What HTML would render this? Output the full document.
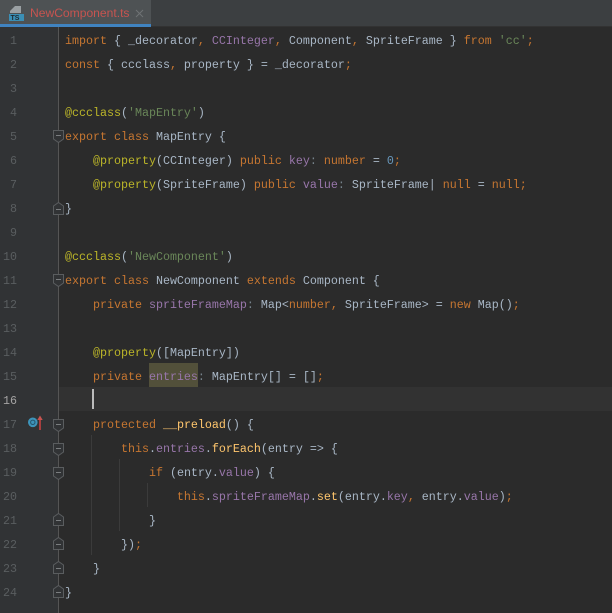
<!DOCTYPE html>
<html><head><meta charset="utf-8">
<style>
html,body{margin:0;padding:0;background:#2b2b2b}
#r{position:relative;width:612px;height:613px;overflow:hidden;background:#2b2b2b}
.a{position:absolute}
.l{position:absolute;left:65px;height:24px;line-height:24px;white-space:pre;font:11.67px/24px "Liberation Mono",monospace;color:#a9b7c6}
.n{position:absolute;left:0;width:17px;text-align:right;height:24px;font:11.67px/24px "Liberation Mono",monospace;color:#5a5e60}
.k{color:#c67631}.s{color:#6a8759}.p{color:#9876aa}.d{color:#bbb529}.m{color:#6897bb}.f{color:#ffc66d}.c{color:#77838c}
.g{position:absolute;width:1px;background:#3b3b3b}
svg.fd{position:absolute;left:52px;width:13px;height:15px}
</style></head><body><div id="r">
<div class="a" style="left:0;top:0;width:612px;height:26px;background:#3c3f41"></div>
<div class="a" style="left:0;top:26px;width:612px;height:1px;background:#323232"></div>
<div class="a" style="left:0;top:0;width:151px;height:24px;background:#4e5254"></div>
<div class="a" style="left:0;top:24px;width:151px;height:3px;background:#4083c0"></div>
<svg class="a" style="left:9px;top:5px" width="16" height="16" viewBox="0 0 16 16"><path d="M6 1H12V8H1V6L6 1Z" fill="#9aa0a3"/><rect x="0" y="9" width="15" height="7" fill="#3b8fb5"/><text x="1.5" y="15" font-family="Liberation Sans" font-size="7" font-weight="bold" fill="#1e2a30">TS</text></svg>
<div class="a" style="left:30px;top:0;height:25px;font:12.1px/26px 'Liberation Sans',sans-serif;color:#c75450;white-space:pre">NewComponent.ts</div>
<svg class="a" style="left:135px;top:9px" width="9" height="9" viewBox="0 0 9 9"><path d="M1 1L8 8M8 1L1 8" stroke="#6f7375" stroke-width="1"/></svg>

<div class="a" style="left:0;top:27px;width:58px;height:586px;background:#313335"></div>
<div class="a" style="left:0;top:387px;width:612px;height:24px;background:#323232"></div>
<div class="a" style="left:0;top:387px;width:58px;height:24px;background:#313335"></div>
<div class="a" style="left:58px;top:27px;width:1px;height:586px;background:#555"></div>
<div class="a" style="left:149px;top:363px;width:49px;height:24px;background:#52503a"></div>
<div class="a" style="left:92px;top:389px;width:2px;height:20px;background:#bbbbbb"></div>

<div class="g" style="left:91px;top:435px;height:120px"></div>
<div class="g" style="left:119px;top:459px;height:72px"></div>
<div class="g" style="left:147px;top:483px;height:24px"></div>

<div class="n" style="top:29px">1</div>
<div class="n" style="top:53px">2</div>
<div class="n" style="top:77px">3</div>
<div class="n" style="top:101px">4</div>
<div class="n" style="top:125px">5</div>
<div class="n" style="top:149px">6</div>
<div class="n" style="top:173px">7</div>
<div class="n" style="top:197px">8</div>
<div class="n" style="top:221px">9</div>
<div class="n" style="top:245px">10</div>
<div class="n" style="top:269px">11</div>
<div class="n" style="top:293px">12</div>
<div class="n" style="top:317px">13</div>
<div class="n" style="top:341px">14</div>
<div class="n" style="top:365px">15</div>
<div class="n" style="top:389px;color:#a4a3a3">16</div>
<div class="n" style="top:413px">17</div>
<div class="n" style="top:437px">18</div>
<div class="n" style="top:461px">19</div>
<div class="n" style="top:485px">20</div>
<div class="n" style="top:509px">21</div>
<div class="n" style="top:533px">22</div>
<div class="n" style="top:557px">23</div>
<div class="n" style="top:581px">24</div>

<div class="l" style="top:29px"><span class="k">import</span> { _decorator<span class="k">,</span> <span class="p">CCInteger</span><span class="k">,</span> Component<span class="k">,</span> SpriteFrame } <span class="k">from</span> <span class="s">'cc'</span><span class="k">;</span></div>
<div class="l" style="top:53px"><span class="k">const</span> { ccclass<span class="k">,</span> property } = _decorator<span class="k">;</span></div>
<div class="l" style="top:101px"><span class="d">@ccclass</span>(<span class="s">'MapEntry'</span>)</div>
<div class="l" style="top:125px"><span class="k">export class</span> MapEntry {</div>
<div class="l" style="top:149px">    <span class="d">@property</span>(CCInteger) <span class="k">public</span> <span class="p">key</span><span class="c">:</span> <span class="k">number</span> = <span class="m">0</span><span class="k">;</span></div>
<div class="l" style="top:173px">    <span class="d">@property</span>(SpriteFrame) <span class="k">public</span> <span class="p">value</span><span class="c">:</span> SpriteFrame| <span class="k">null</span> = <span class="k">null;</span></div>
<div class="l" style="top:197px">}</div>
<div class="l" style="top:245px"><span class="d">@ccclass</span>(<span class="s">'NewComponent'</span>)</div>
<div class="l" style="top:269px"><span class="k">export class</span> NewComponent <span class="k">extends</span> Component {</div>
<div class="l" style="top:293px">    <span class="k">private</span> <span class="p">spriteFrameMap</span><span class="c">:</span> Map&lt;<span class="k">number,</span> SpriteFrame&gt; = <span class="k">new</span> Map()<span class="k">;</span></div>
<div class="l" style="top:341px">    <span class="d">@property</span>([MapEntry])</div>
<div class="l" style="top:365px">    <span class="k">private</span> <span class="p">entries</span><span class="c">:</span> MapEntry[] = []<span class="k">;</span></div>
<div class="l" style="top:413px">    <span class="k">protected</span> <span class="f">__preload</span>() {</div>
<div class="l" style="top:437px">        <span class="k">this</span>.<span class="p">entries</span>.<span class="f">forEach</span>(entry =&gt; {</div>
<div class="l" style="top:461px">            <span class="k">if</span> (entry.<span class="p">value</span>) {</div>
<div class="l" style="top:485px">                <span class="k">this</span>.<span class="p">spriteFrameMap</span>.<span class="f">set</span>(entry.<span class="p">key</span><span class="k">,</span> entry.<span class="p">value</span>)<span class="k">;</span></div>
<div class="l" style="top:509px">            }</div>
<div class="l" style="top:533px">        })<span class="k">;</span></div>
<div class="l" style="top:557px">    }</div>
<div class="l" style="top:581px">}</div>

<svg class="fd" style="top:129px" viewBox="0 0 13 15"><path d="M1.5 1.5H11.5V10L6.5 13.5L1.5 10Z" fill="#313335" stroke="#5a5d5f"/><path d="M4 6.5H9" stroke="#7a7d7f"/></svg>
<svg class="fd" style="top:201px" viewBox="0 0 13 15"><path d="M1.5 13.5H11.5V5L6.5 1.5L1.5 5Z" fill="#313335" stroke="#5a5d5f"/><path d="M4 8.5H9" stroke="#7a7d7f"/></svg>
<svg class="fd" style="top:273px" viewBox="0 0 13 15"><path d="M1.5 1.5H11.5V10L6.5 13.5L1.5 10Z" fill="#313335" stroke="#5a5d5f"/><path d="M4 6.5H9" stroke="#7a7d7f"/></svg>
<svg class="fd" style="top:418px" viewBox="0 0 13 15"><path d="M1.5 1.5H11.5V10L6.5 13.5L1.5 10Z" fill="#313335" stroke="#5a5d5f"/><path d="M4 6.5H9" stroke="#7a7d7f"/></svg>
<svg class="fd" style="top:442px" viewBox="0 0 13 15"><path d="M1.5 1.5H11.5V10L6.5 13.5L1.5 10Z" fill="#313335" stroke="#5a5d5f"/><path d="M4 6.5H9" stroke="#7a7d7f"/></svg>
<svg class="fd" style="top:466px" viewBox="0 0 13 15"><path d="M1.5 1.5H11.5V10L6.5 13.5L1.5 10Z" fill="#313335" stroke="#5a5d5f"/><path d="M4 6.5H9" stroke="#7a7d7f"/></svg>
<svg class="fd" style="top:512px" viewBox="0 0 13 15"><path d="M1.5 13.5H11.5V5L6.5 1.5L1.5 5Z" fill="#313335" stroke="#5a5d5f"/><path d="M4 8.5H9" stroke="#7a7d7f"/></svg>
<svg class="fd" style="top:536px" viewBox="0 0 13 15"><path d="M1.5 13.5H11.5V5L6.5 1.5L1.5 5Z" fill="#313335" stroke="#5a5d5f"/><path d="M4 8.5H9" stroke="#7a7d7f"/></svg>
<svg class="fd" style="top:560px" viewBox="0 0 13 15"><path d="M1.5 13.5H11.5V5L6.5 1.5L1.5 5Z" fill="#313335" stroke="#5a5d5f"/><path d="M4 8.5H9" stroke="#7a7d7f"/></svg>
<svg class="fd" style="top:584px" viewBox="0 0 13 15"><path d="M1.5 13.5H11.5V5L6.5 1.5L1.5 5Z" fill="#313335" stroke="#5a5d5f"/><path d="M4 8.5H9" stroke="#7a7d7f"/></svg>

<svg class="a" style="left:27px;top:414px" width="17" height="17" viewBox="0 0 17 17"><circle cx="5.8" cy="8.3" r="4.8" fill="#3d94ba"/><circle cx="5.8" cy="8.3" r="2.2" fill="none" stroke="#26546a" stroke-width="1"/><path d="M13 16V4" stroke="#a83f3f" stroke-width="2"/><path d="M10.3 6L13 1.5L15.7 6Z" fill="#c75450"/></svg>
</div></body></html>
